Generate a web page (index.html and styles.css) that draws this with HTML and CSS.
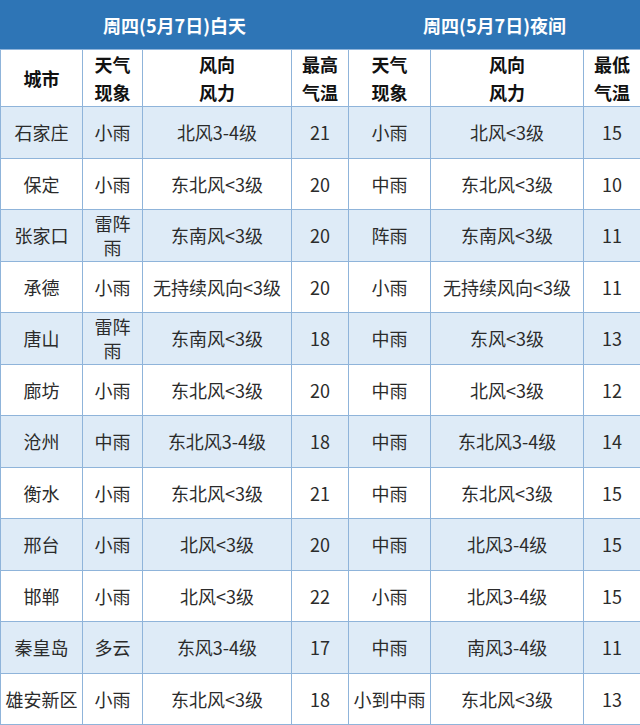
FILE: index.html
```html
<!DOCTYPE html>
<html lang="zh">
<head>
<meta charset="utf-8">
<link rel="stylesheet" href="styles.css">
</head>
<body>
<table class="weather">
  <colgroup>
    <col class="c-city"><col class="c-wx"><col class="c-wind"><col class="c-temp">
    <col class="c-wx2"><col class="c-wind2"><col class="c-temp">
  </colgroup>
  <thead>
    <tr class="title-row">
      <th colspan="4">周四(5月7日)白天</th>
      <th colspan="3">周四(5月7日)夜间</th>
    </tr>
    <tr class="head-row">
      <th>城市</th><th>天气<br>现象</th><th>风向<br>风力</th><th>最高<br>气温</th>
      <th>天气<br>现象</th><th>风向<br>风力</th><th>最低<br>气温</th>
    </tr>
  </thead>
  <tbody>
    <tr class="alt"><td>石家庄</td><td>小雨</td><td>北风3-4级</td><td>21</td><td>小雨</td><td>北风&lt;3级</td><td>15</td></tr>
    <tr><td>保定</td><td>小雨</td><td>东北风&lt;3级</td><td>20</td><td>中雨</td><td>东北风&lt;3级</td><td>10</td></tr>
    <tr class="alt"><td>张家口</td><td>雷阵<br>雨</td><td>东南风&lt;3级</td><td>20</td><td>阵雨</td><td>东南风&lt;3级</td><td>11</td></tr>
    <tr><td>承德</td><td>小雨</td><td>无持续风向&lt;3级</td><td>20</td><td>小雨</td><td>无持续风向&lt;3级</td><td>11</td></tr>
    <tr class="alt"><td>唐山</td><td>雷阵<br>雨</td><td>东南风&lt;3级</td><td>18</td><td>中雨</td><td>东风&lt;3级</td><td>13</td></tr>
    <tr><td>廊坊</td><td>小雨</td><td>东北风&lt;3级</td><td>20</td><td>中雨</td><td>北风&lt;3级</td><td>12</td></tr>
    <tr class="alt"><td>沧州</td><td>中雨</td><td>东北风3-4级</td><td>18</td><td>中雨</td><td>东北风3-4级</td><td>14</td></tr>
    <tr><td>衡水</td><td>小雨</td><td>东北风&lt;3级</td><td>21</td><td>中雨</td><td>东北风&lt;3级</td><td>15</td></tr>
    <tr class="alt"><td>邢台</td><td>小雨</td><td>北风&lt;3级</td><td>20</td><td>中雨</td><td>北风3-4级</td><td>15</td></tr>
    <tr><td>邯郸</td><td>小雨</td><td>北风&lt;3级</td><td>22</td><td>小雨</td><td>北风3-4级</td><td>15</td></tr>
    <tr class="alt"><td>秦皇岛</td><td>多云</td><td>东风3-4级</td><td>17</td><td>中雨</td><td>南风3-4级</td><td>11</td></tr>
    <tr><td>雄安新区</td><td>小雨</td><td>东北风&lt;3级</td><td>18</td><td>小到中雨</td><td>东北风&lt;3级</td><td>13</td></tr>
  </tbody>
</table>
</body>
</html>
```

FILE: styles.css
```css
html, body {
  margin: 0;
  padding: 0;
  background: #ffffff;
}

.weather {
  width: 640px;
  border-collapse: collapse;
  table-layout: fixed;
  font-family: "Noto Sans CJK SC", "Noto Sans", sans-serif;
  color: #2b2b2b;
  font-size: 18px;
}

.c-city { width: 82px; }
.c-wx { width: 60px; }
.c-wind { width: 149px; }
.c-temp { width: 57px; }
.c-wx2 { width: 82px; }
.c-wind2 { width: 153px; }

.weather th,
.weather td {
  border: 1px solid #8fb4da;
  text-align: center;
  vertical-align: middle;
  padding: 0;
  white-space: nowrap;
}

.title-row th {
  height: 48px;
  background: #2e75b6;
  color: #ffffff;
  font-weight: bold;
  font-size: 18px;
  border-color: #2e75b6;
  border-bottom-color: #8fb4da;
}

.head-row th {
  height: 56px;
  font-weight: bold;
  font-size: 18px;
  line-height: 28px;
  color: #111111;
}

.weather tbody td {
  height: 50.5px;
  line-height: 24px;
}

.weather tbody tr.alt td {
  background: #deebf7;
}
```
